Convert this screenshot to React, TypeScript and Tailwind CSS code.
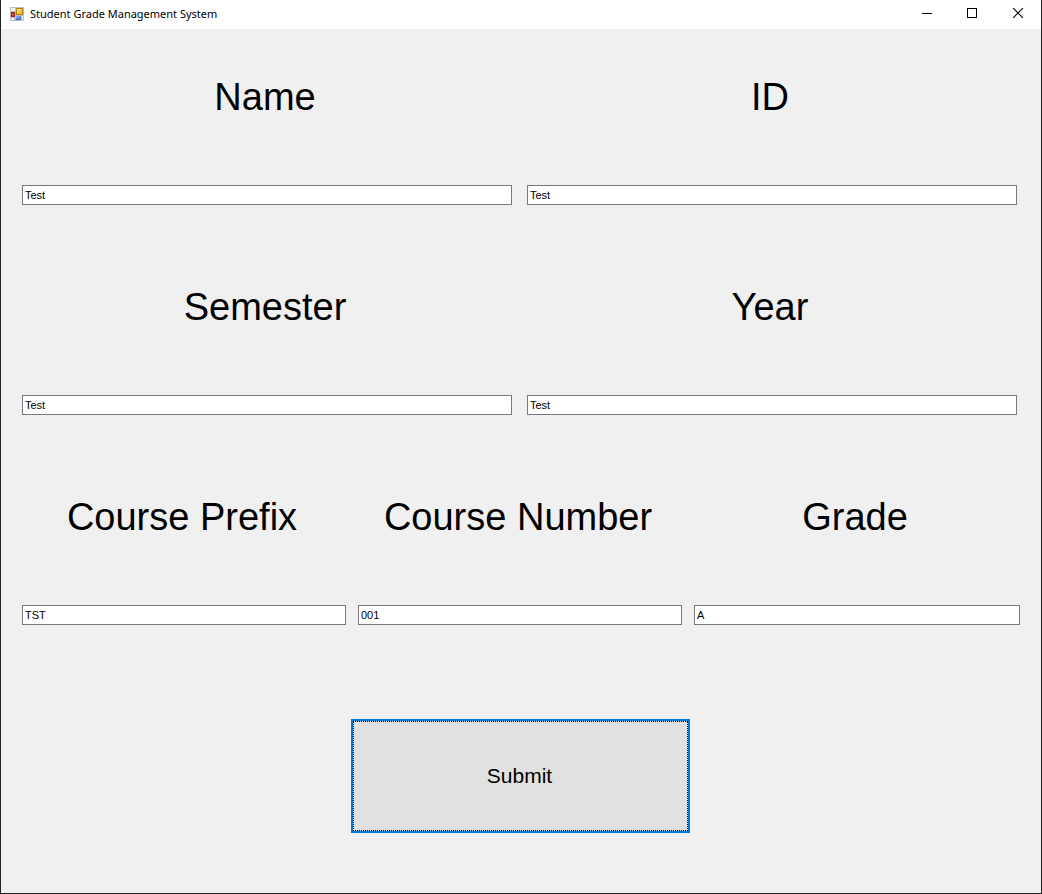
import { useState } from "react";

type FieldProps = { id: string; label: string; initial: string };

function Field({ id, label, initial }: FieldProps) {
  const [value, setValue] = useState(initial);
  return (
    <div className="flex min-w-0 flex-col gap-5">
      <label
        htmlFor={id}
        className="flex h-[136px] items-center justify-center pr-1 text-[38px] leading-[44px] whitespace-nowrap"
      >
        {label}
      </label>
      <input
        id={id}
        type="text"
        value={value}
        onChange={(e) => setValue(e.target.value)}
        className="h-5 w-full border border-[#7a7a7a] bg-white px-[2px] text-[11px] leading-[18px] text-black outline-none"
      />
    </div>
  );
}

function FormIcon() {
  return (
    <svg width="14" height="14" viewBox="0 0 14 14" shapeRendering="crispEdges" aria-hidden="true">
      <defs>
        <linearGradient id="gold" x1="0" y1="0" x2="1" y2="1">
          <stop offset="0" stopColor="#fff0a0" />
          <stop offset="1" stopColor="#f0ac00" />
        </linearGradient>
        <linearGradient id="blue" x1="0" y1="0" x2="1" y2="1">
          <stop offset="0" stopColor="#8db8f5" />
          <stop offset="1" stopColor="#3a72d8" />
        </linearGradient>
      </defs>
      <path fill="#bdbdbd" d="M0 0h14v14H0z" />
      <path fill="#f4f4f4" d="M1 1h4v3H1zM1 11h3v2H1zM12 9h1v4h-1z" />
      <path fill="#8c2a1c" d="M1 5h4v5H1z" />
      <path fill="#d8472f" d="M2 6h2v3H2z" />
      <path fill="#b38116" d="M6 1h7v7H6z" />
      <path fill="url(#gold)" d="M7 2h5v5H7z" />
      <path fill="#3c68b8" d="M6 9h5v4H6z" />
      <path fill="url(#blue)" d="M6 9h5v3H6z" />
    </svg>
  );
}

export default function App() {
  return (
    <div className="flex min-h-screen flex-col border-x border-b border-[#222222] bg-[#f0f0f0] font-['Liberation_Sans',Arial,sans-serif] text-black">
      <header className="flex h-[29px] items-stretch bg-white">
        <div className="flex flex-1 items-center gap-[6px] pr-2 pb-[2px] pl-[9px]">
          <FormIcon />
          <h1 className="font-['Noto_Sans','Open_Sans',sans-serif] text-[11px] leading-4 whitespace-nowrap">
            Student Grade Management System
          </h1>
        </div>
        <button type="button" aria-label="Minimize" className="flex w-11 justify-center pt-2">
          <svg width="10" height="10" viewBox="0 0 10 10" shapeRendering="crispEdges">
            <path fill="#000" d="M0 5h10v1H0z" />
          </svg>
        </button>
        <button type="button" aria-label="Maximize" className="flex w-[46px] justify-center pt-2">
          <svg width="10" height="10" viewBox="0 0 10 10" shapeRendering="crispEdges">
            <path fill="none" stroke="#000" d="M.5.5h9v9h-9z" />
          </svg>
        </button>
        <button type="button" aria-label="Close" className="flex w-[46px] justify-center pt-2">
          <svg width="10" height="10" viewBox="0 0 10 10">
            <path fill="none" stroke="#000" strokeWidth="1.1" d="M0 0l10 10M10 0L0 10" />
          </svg>
        </button>
      </header>

      <form className="flex flex-1 flex-col px-[21px] pb-[60px]" onSubmit={(e) => e.preventDefault()}>
        <div className="flex flex-col gap-[34px]">
          <div className="grid grid-cols-2 gap-[15px] pr-[3px]">
            <Field id="name" label="Name" initial="Test" />
            <Field id="student-id" label="ID" initial="Test" />
          </div>
          <div className="grid grid-cols-2 gap-[15px] pr-[3px]">
            <Field id="semester" label="Semester" initial="Test" />
            <Field id="year" label="Year" initial="Test" />
          </div>
          <div className="grid grid-cols-[324fr_324fr_326fr] gap-3">
            <Field id="prefix" label="Course Prefix" initial="TST" />
            <Field id="number" label="Course Number" initial="001" />
            <Field id="grade" label="Grade" initial="A" />
          </div>
        </div>
        <div className="flex justify-center pt-[94px] pr-px">
          <button
            type="submit"
            className="flex h-[114px] w-[339px] border-2 border-[#0078d7] bg-[#e1e1e1] text-[21px] leading-6"
          >
            <span className="flex h-full w-full items-center justify-center border border-dotted border-black pr-[2px]">
              Submit
            </span>
          </button>
        </div>
      </form>
    </div>
  );
}
